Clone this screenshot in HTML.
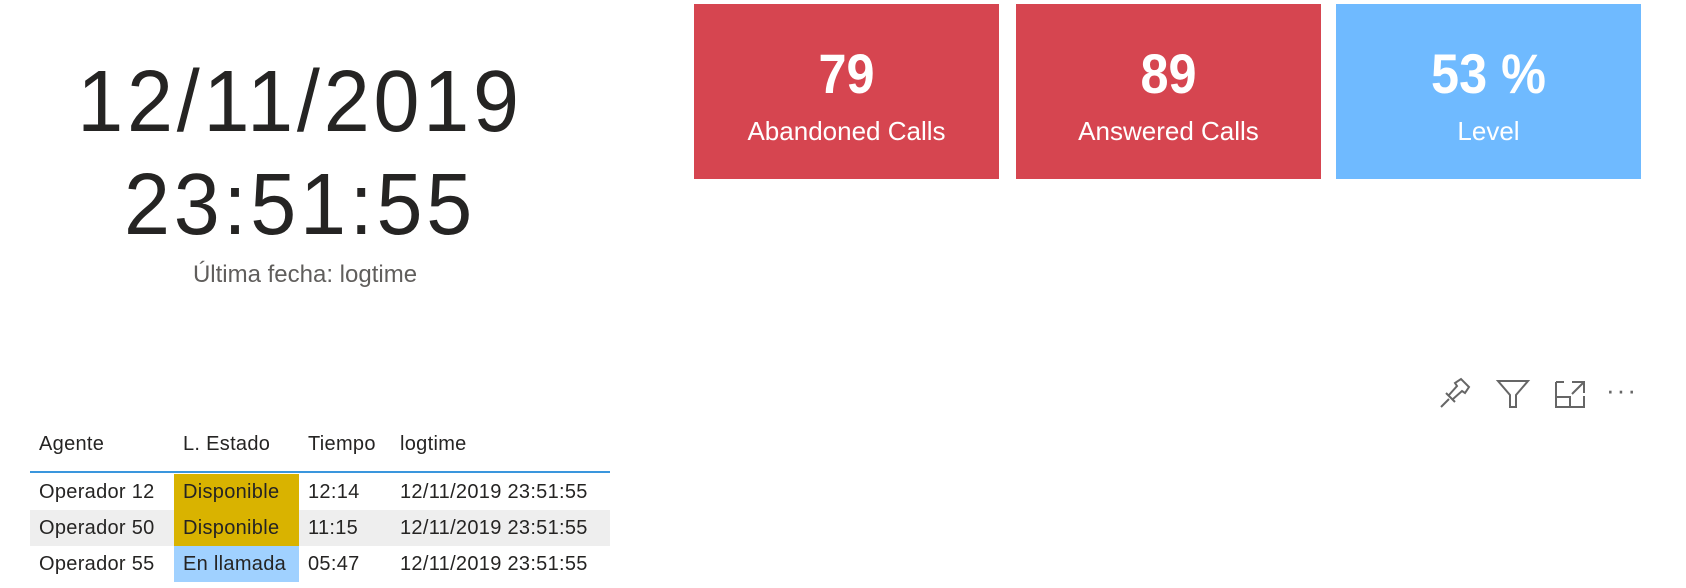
<!DOCTYPE html>
<html><head><meta charset="utf-8"><style>
body{margin:0;width:1686px;height:588px;background:#fff;overflow:hidden;position:relative;font-family:"Liberation Sans",sans-serif}
.card{position:absolute;top:4px;height:175px;width:305px;color:#fff;text-align:center}
.card .n{position:absolute;top:38px;left:0;right:0;font-size:56px;line-height:64px;font-weight:bold;transform:scaleX(0.9)}
.card .l{position:absolute;top:110px;left:0;right:0;font-size:26px;line-height:34px}
.big{position:absolute;left:0;width:600px;text-align:center;color:#252423;font-size:87px;line-height:100px;transform:scaleX(0.95);letter-spacing:4px}
.row{position:absolute;left:30px;width:580px;height:36px;font-size:20px;color:#252423}
.row span{position:absolute;top:0;line-height:36px;letter-spacing:0.3px}
.row span.c{width:125px;height:36px;left:144px}
</style></head><body>
<div class="big" style="top:52px">12/11/2019</div>
<div class="big" style="top:155px">23:51:55</div>
<div style="position:absolute;top:261px;left:0;width:610px;text-align:center;font-size:24px;color:#605e5c">Última fecha: logtime</div>

<div class="card" style="left:694px;background:#d64550"><div class="n">79</div><div class="l">Abandoned Calls</div></div>
<div class="card" style="left:1016px;background:#d64550"><div class="n">89</div><div class="l">Answered Calls</div></div>
<div class="card" style="left:1336px;background:#6fbaff"><div class="n">53 %</div><div class="l">Level</div></div>

<svg style="position:absolute;left:1434px;top:376px" width="230" height="34" fill="none" stroke="#666" stroke-width="2">
<path d="M7 31 L15 23 M12 17 L21 26 M15 19 L23 10 L21 7 L27 3 L35 11 L31 17 L28 15 L19 23"/>
<path d="M64 5 H94 L82 19 V31 H76 V19 Z"/>
<path d="M122 6 H130 M122 6 V31 H150 V20 M122 21 H136 V31 M138 6 H150 V17 M150 6 L138 18"/>
</svg>
<div style="position:absolute;left:1606px;top:377px;font-size:26px;color:#666;letter-spacing:2px;line-height:26px">···</div>

<div class="row" style="top:426px"><span style="left:9px">Agente</span><span style="left:153px">L. Estado</span><span style="left:278px">Tiempo</span><span style="left:370px">logtime</span></div>
<div style="position:absolute;left:30px;top:471px;width:580px;height:2px;background:#3a96dd"></div>
<div class="row" style="top:474px"><span class="c" style="background:#d9b300"></span><span style="left:9px">Operador 12</span><span style="left:153px">Disponible</span><span style="left:278px">12:14</span><span style="left:370px">12/11/2019 23:51:55</span></div>
<div class="row" style="top:510px;background:#eee"><span class="c" style="background:#d9b300"></span><span style="left:9px">Operador 50</span><span style="left:153px">Disponible</span><span style="left:278px">11:15</span><span style="left:370px">12/11/2019 23:51:55</span></div>
<div class="row" style="top:546px"><span class="c" style="background:#a0d1ff"></span><span style="left:9px">Operador 55</span><span style="left:153px">En llamada</span><span style="left:278px">05:47</span><span style="left:370px">12/11/2019 23:51:55</span></div>
</body></html>
